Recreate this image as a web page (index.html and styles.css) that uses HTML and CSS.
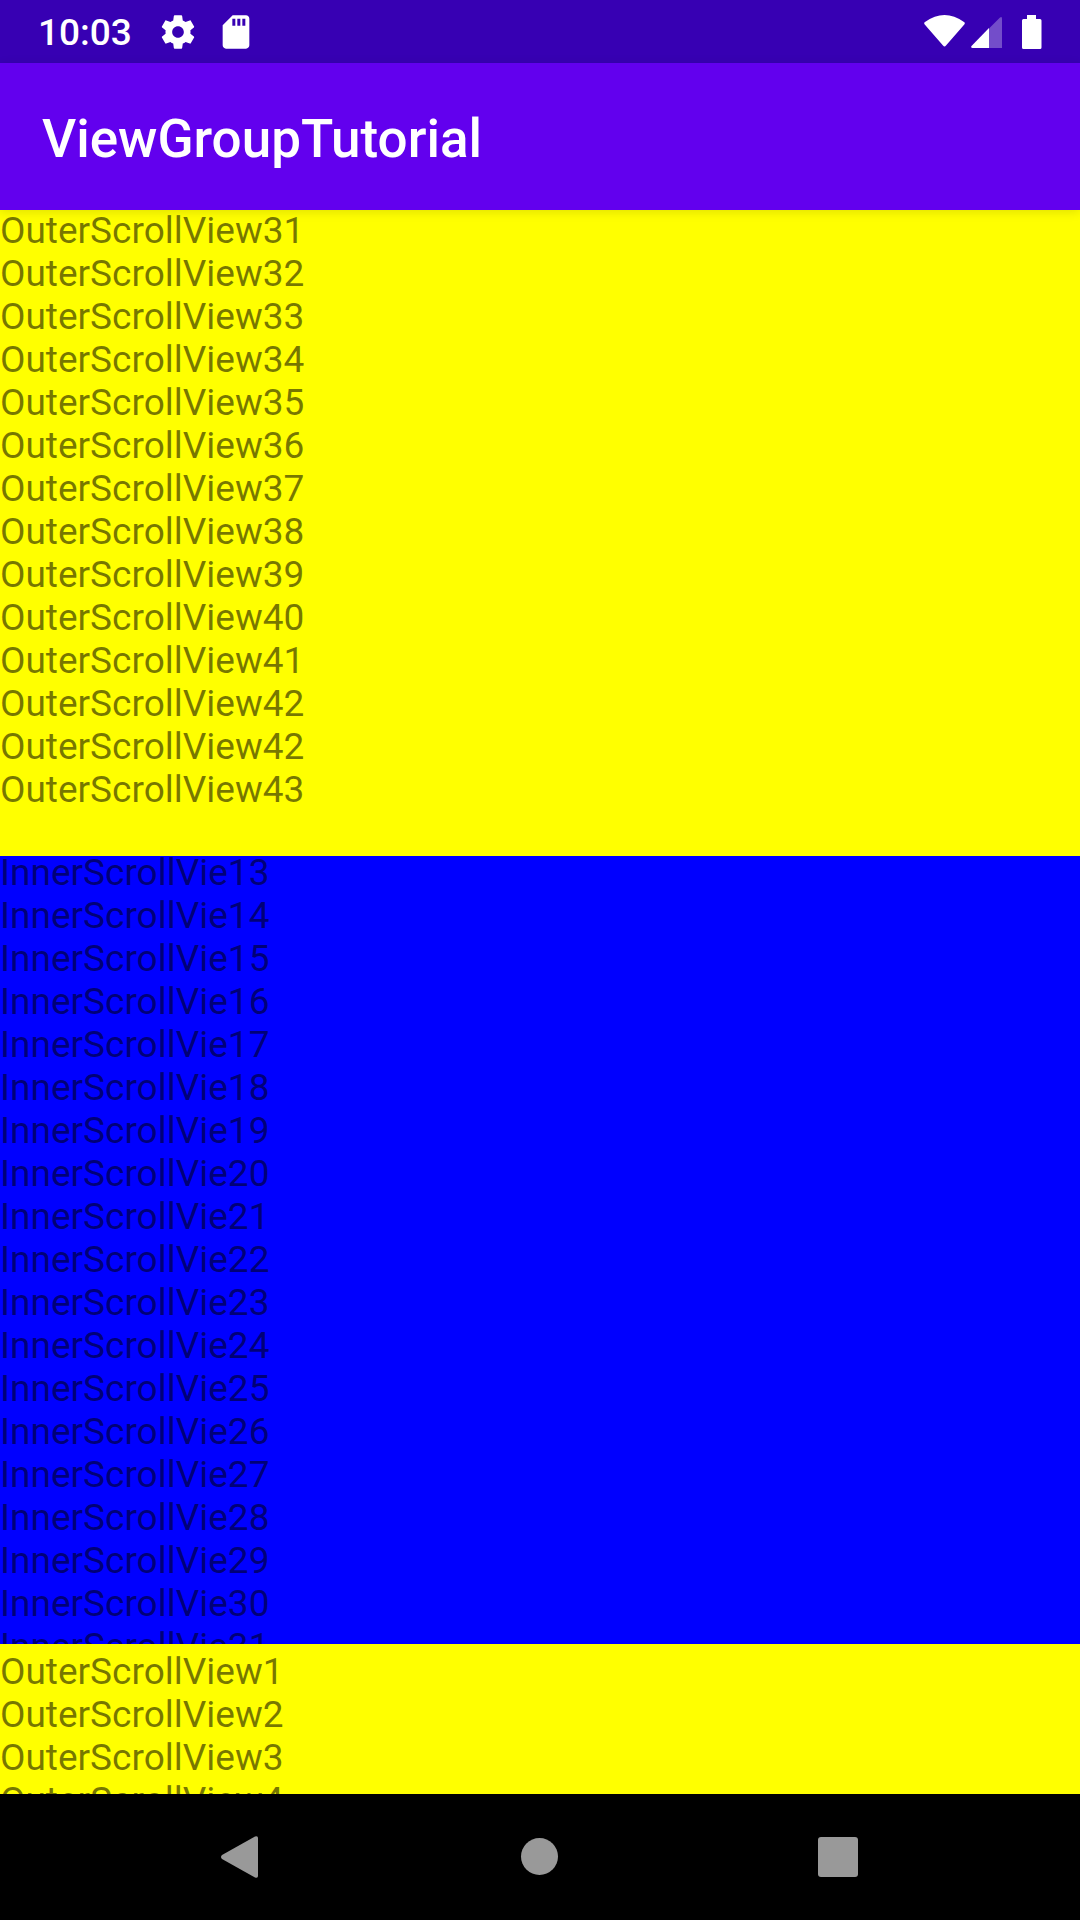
FILE: index.html
```html
<!DOCTYPE html>
<html lang="en">
<head>
<meta charset="utf-8">
<meta name="viewport" content="width=device-width, initial-scale=1">
<title>ViewGroupTutorial</title>
<link rel="stylesheet" href="styles.css">
</head>
<body>
<div class="status-bar">
  <div class="status-start">
    <time class="clock">10:03</time>
    <svg class="status-icon" viewBox="0 0 24 24" aria-hidden="true"><path d="M19.43 12.98c.04-.32.07-.64.07-.98s-.03-.66-.07-.98l2.11-1.65c.19-.15.24-.42.12-.64l-2-3.46c-.12-.22-.39-.3-.61-.22l-2.49 1c-.52-.4-1.08-.73-1.69-.98l-.38-2.65C14.46 2.18 14.25 2 14 2h-4c-.25 0-.46.18-.49.42l-.38 2.65c-.61.25-1.17.59-1.69.98l-2.49-1c-.23-.09-.49 0-.61.22l-2 3.46c-.13.22-.07.49.12.64l2.11 1.65c-.04.32-.07.65-.07.98s.03.66.07.98l-2.11 1.65c-.19.15-.24.42-.12.64l2 3.46c.12.22.39.3.61.22l2.49-1c.52.4 1.08.73 1.69.98l.38 2.65c.03.24.24.42.49.42h4c.25 0 .46-.18.49-.42l.38-2.65c.61-.25 1.17-.59 1.69-.98l2.49 1c.23.09.49 0 .61-.22l2-3.46c.12-.22.07-.49-.12-.64l-2.11-1.65zM12 15.5c-1.93 0-3.5-1.57-3.5-3.5s1.57-3.5 3.5-3.5 3.5 1.57 3.5 3.5-1.57 3.5-3.5 3.5z"/></svg>
    <svg class="status-icon" viewBox="0 0 24 24" aria-hidden="true"><path fill-rule="evenodd" d="M18 2h-8L4 8v12c0 1.100.9 2 2 2h12c1.100 0 2-.9 2-2V4c0-1.100-.9-2-2-2zM9.800 4h1.800v4.200h-1.800zM12.800 4h1.800v4.200h-1.800zM15.800 4h1.800v4.200h-1.800z"/></svg>
  </div>
  <div class="status-end">
    <svg class="wifi" viewBox="0 0 41 34" aria-hidden="true"><path d="M1 7Q20.500-7 40 7Q41.500 8 40.300 9.500L22 30.500Q20.500 32.500 19 30.500L.7 9.500Q-.5 8 1 7z"/></svg>
    <svg class="signal" viewBox="0 0 32 34" aria-hidden="true"><path opacity=".3" d="M18 13.500L29 2.500Q31 1 31 3.500V33H18z"/><path d="M18 13V33H1.500Q-.5 33 .5 31z"/></svg>
    <svg class="battery" viewBox="0 0 20 34" aria-hidden="true"><path d="M5 0h9v4h4q1.500 0 1.500 1.500v27q0 1.500-1.500 1.500H1.500Q0 34 0 32.500v-27Q0 4 1.500 4H5z"/></svg>
  </div>
</div>
<header class="app-bar"><h1 class="app-title">ViewGroupTutorial</h1></header>
<main class="outer-scroll">
  <ul class="rows rows-before">
    <li>OuterScrollView31</li>
    <li>OuterScrollView32</li>
    <li>OuterScrollView33</li>
    <li>OuterScrollView34</li>
    <li>OuterScrollView35</li>
    <li>OuterScrollView36</li>
    <li>OuterScrollView37</li>
    <li>OuterScrollView38</li>
    <li>OuterScrollView39</li>
    <li>OuterScrollView40</li>
    <li>OuterScrollView41</li>
    <li>OuterScrollView42</li>
    <li>OuterScrollView42</li>
    <li>OuterScrollView43</li>
  </ul>
  <section class="inner-scroll">
    <ul class="rows rows-inner">
      <li>InnerScrollVie13</li>
      <li>InnerScrollVie14</li>
      <li>InnerScrollVie15</li>
      <li>InnerScrollVie16</li>
      <li>InnerScrollVie17</li>
      <li>InnerScrollVie18</li>
      <li>InnerScrollVie19</li>
      <li>InnerScrollVie20</li>
      <li>InnerScrollVie21</li>
      <li>InnerScrollVie22</li>
      <li>InnerScrollVie23</li>
      <li>InnerScrollVie24</li>
      <li>InnerScrollVie25</li>
      <li>InnerScrollVie26</li>
      <li>InnerScrollVie27</li>
      <li>InnerScrollVie28</li>
      <li>InnerScrollVie29</li>
      <li>InnerScrollVie30</li>
      <li>InnerScrollVie31</li>
    </ul>
  </section>
  <ul class="rows rows-after">
    <li>OuterScrollView1</li>
    <li>OuterScrollView2</li>
    <li>OuterScrollView3</li>
    <li>OuterScrollView4</li>
  </ul>
</main>
<nav class="nav-bar" aria-label="System navigation">
  <button class="nav-button" type="button" aria-label="Back"><svg class="nav-icon" viewBox="0 0 44 44" aria-hidden="true"><path d="M3 20L36 1.500Q39 .5 39 3V41Q39 43.500 36 42.500L3 24Q1 22 3 20z"/></svg></button>
  <button class="nav-button" type="button" aria-label="Home"><svg class="nav-icon" viewBox="0 0 44 44" aria-hidden="true"><circle cx="21.500" cy="21.500" r="18.500"/></svg></button>
  <button class="nav-button" type="button" aria-label="Recent apps"><svg class="nav-icon" viewBox="0 0 44 44" aria-hidden="true"><rect x="1" y="2" width="40" height="40" rx="3"/></svg></button>
</nav>
</body>
</html>
```
FILE: styles.css
```css
* {
  box-sizing: border-box;
}

body {
  margin: 0;
  height: 100vh;
  display: flex;
  flex-direction: column;
  font-family: Roboto, "Noto Sans", sans-serif;
  background: #000;
}

.status-bar {
  flex: none;
  height: 63px;
  display: flex;
  align-items: center;
  justify-content: space-between;
  padding: 0 38px;
  background: #3700b3;
  color: #fff;
  fill: #fff;
}

.status-start,
.status-end {
  display: flex;
  align-items: center;
}

.status-start {
  gap: 18px;
}

.clock {
  padding: 2px 8px 0 0;
  font-size: 37px;
  font-weight: 500;
  line-height: 43px;
}

.status-icon {
  width: 40px;
  height: 40px;
}

.wifi {
  width: 41px;
  height: 34px;
  margin-right: 6px;
}

.signal {
  width: 32px;
  height: 34px;
  margin-right: 19px;
}

.battery {
  width: 20px;
  height: 34px;
}

.app-bar {
  flex: none;
  position: relative;
  height: 147px;
  display: flex;
  align-items: center;
  padding: 4px 42px 0;
  background: #6200ee;
  color: #fff;
  box-shadow: 0 2px 10px rgba(0, 0, 0, 0.12);
}

.app-title {
  margin: 0;
  font-size: 53px;
  font-weight: 500;
  line-height: 62px;
}

.outer-scroll {
  flex: 1;
  min-height: 0;
  overflow: hidden;
  background: #ff0;
}

.rows {
  margin: 0;
  padding: 0;
  list-style: none;
  font-size: 37px;
  line-height: 43px;
  color: rgba(0, 0, 0, 0.54);
}

/* The lists are scrolled part of a row past their top edge. */
.rows-before {
  margin-top: -1px;
  padding-bottom: 45px;
}

.inner-scroll {
  height: 788px;
  overflow: hidden;
  background: #00f;
}

.rows-inner {
  margin-top: -5px;
}

.rows-after {
  padding-top: 6px;
}

.nav-bar {
  flex: none;
  height: 126px;
  display: flex;
  justify-content: center;
  background: #000;
}

.nav-button {
  width: 28%;
  max-width: 299px;
  display: flex;
  align-items: center;
  justify-content: center;
  padding: 0;
  border: 0;
  background: none;
}

.nav-icon {
  width: 44px;
  height: 44px;
  fill: #999;
}
```
